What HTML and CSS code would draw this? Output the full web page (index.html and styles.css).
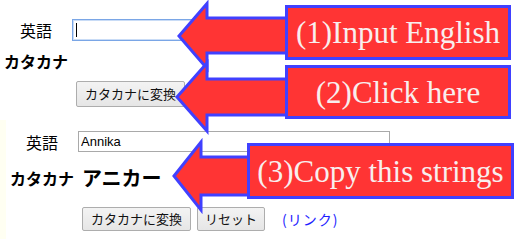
FILE: index.html
```html
<!DOCTYPE html>
<html lang="ja">
<head>
<meta charset="utf-8">
<title>カタカナ変換</title>
<link rel="stylesheet" href="styles.css">
</head>
<body>
<div class="page">
  <section class="panel panel-top">
    <span class="label">英語</span>
    <span class="field"><input class="text text-focus" type="text"><span class="caret"></span></span>
    <span class="label strong">カタカナ</span>
    <span class="result"></span>
    <span></span>
    <div class="actions"><button class="btn btn-tall" type="button">カタカナに変換</button></div>
  </section>

  <section class="panel panel-bottom">
    <span class="label">英語</span>
    <span class="field"><input class="text" type="text" value="Annika"></span>
    <span class="label strong">カタカナ</span>
    <span class="result">アニカー</span>
    <span></span>
    <div class="actions">
      <button class="btn" type="button">カタカナに変換</button>
      <button class="btn btn-reset" type="button">リセット</button>
      <a class="link" href="#">(リンク)</a>
    </div>
  </section>

  <div class="overlay">
    <svg class="arrows" width="514" height="239" viewBox="0 0 514 239">
      <polygon class="arrow" points="179,36 207,3.5 207,18 292,18 292,53 207,53 207,68.5"/>
      <polygon class="arrow" points="177,97 207,63 207,79 292,79 292,115 207,115 207,131"/>
      <polygon class="arrow" points="174,176 201,142 201,157 252,157 252,195 201,195 201,210"/>
    </svg>
    <div class="callout callout-1">(1)Input English</div>
    <div class="callout callout-2">(2)Click here</div>
    <div class="callout callout-3">(3)Copy this strings</div>
  </div>
</div>
</body>
</html>
```

FILE: styles.css
```css
html, body {
  margin: 0;
  padding: 0;
  background: #ffffff;
}

.page {
  position: relative;
  width: 514px;
  height: 239px;
  overflow: hidden;
  font-family: "Noto Sans CJK JP", "Noto Sans", sans-serif;
  color: #000;
}

.panel {
  display: grid;
  grid-template-columns: 64px auto;
  column-gap: 4px;
  align-items: center;
}

.panel-top {
  padding: 19px 0 0 4px;
  grid-template-rows: 22px 40px 26px;
}

.panel-bottom {
  margin-top: 13px;
  padding: 11px 0 8px 4px;
  border-left: 6px solid #fffff2;
  grid-template-rows: 21px 55px 24px;
}

.label {
  justify-self: center;
  font-size: 16px;
  line-height: 20px;
  white-space: nowrap;
}

.strong {
  font-weight: 700;
}

.panel-bottom .strong,
.panel-bottom .result {
  margin-bottom: 4px;
}

.field {
  position: relative;
  display: block;
  height: 100%;
}

.text {
  box-sizing: border-box;
  display: block;
  width: 312px;
  height: 100%;
  margin: 0;
  padding: 0 2px;
  border: 1px solid #a9a9a9;
  font-family: "Liberation Sans", Arial, sans-serif;
  font-size: 13px;
  color: #000;
  background: #fff;
  outline: none;
}

.text-focus {
  border-color: #7aa6e6;
  box-shadow: inset 0 0 0 1px #c9dcf6;
}

.caret {
  position: absolute;
  left: 4px;
  top: 4px;
  width: 1px;
  height: 14px;
  background: #000;
}

.result {
  margin-left: 4px;
  font-size: 20px;
  font-weight: 700;
  line-height: 24px;
}

.actions {
  display: flex;
  align-items: center;
  margin-left: 4px;
  height: 100%;
}

.btn {
  box-sizing: border-box;
  height: 24px;
  margin: 0 6px 0 0;
  padding: 0 8px;
  border: 1px solid #adadad;
  border-radius: 2px;
  background: linear-gradient(#f3f3f3, #e6e6e6);
  font-family: "Noto Sans CJK JP", "Noto Sans", sans-serif;
  font-size: 13px;
  line-height: 20px;
  color: #111;
  white-space: nowrap;
}

.btn-tall {
  height: 26px;
}

.btn-reset {
  padding: 0 7px;
}

.link {
  margin-left: 11px;
  font-size: 14px;
  letter-spacing: 1px;
  color: #1d1dff;
  text-decoration: none;
}

.overlay {
  position: absolute;
  left: 0;
  top: 0;
  width: 514px;
  height: 239px;
  pointer-events: none;
}

.arrows {
  position: absolute;
  left: 0;
  top: 0;
  display: block;
}

.arrow {
  fill: #ff3434;
  stroke: #4040ff;
  stroke-width: 3;
  stroke-linejoin: miter;
}

.callout {
  position: absolute;
  box-sizing: border-box;
  display: flex;
  align-items: center;
  justify-content: center;
  border: 3px solid #4040ff;
  background: #ff3434;
  color: #f8eeee;
  font-family: "Liberation Serif", "Times New Roman", serif;
  font-size: 31px;
  line-height: 1;
  white-space: nowrap;
}

.callout-1 {
  left: 285px;
  top: 5px;
  width: 226px;
  height: 55px;
}

.callout-2 {
  left: 285px;
  top: 65px;
  width: 226px;
  height: 54px;
}

.callout-3 {
  left: 247px;
  top: 143px;
  width: 267px;
  height: 56px;
}
```
